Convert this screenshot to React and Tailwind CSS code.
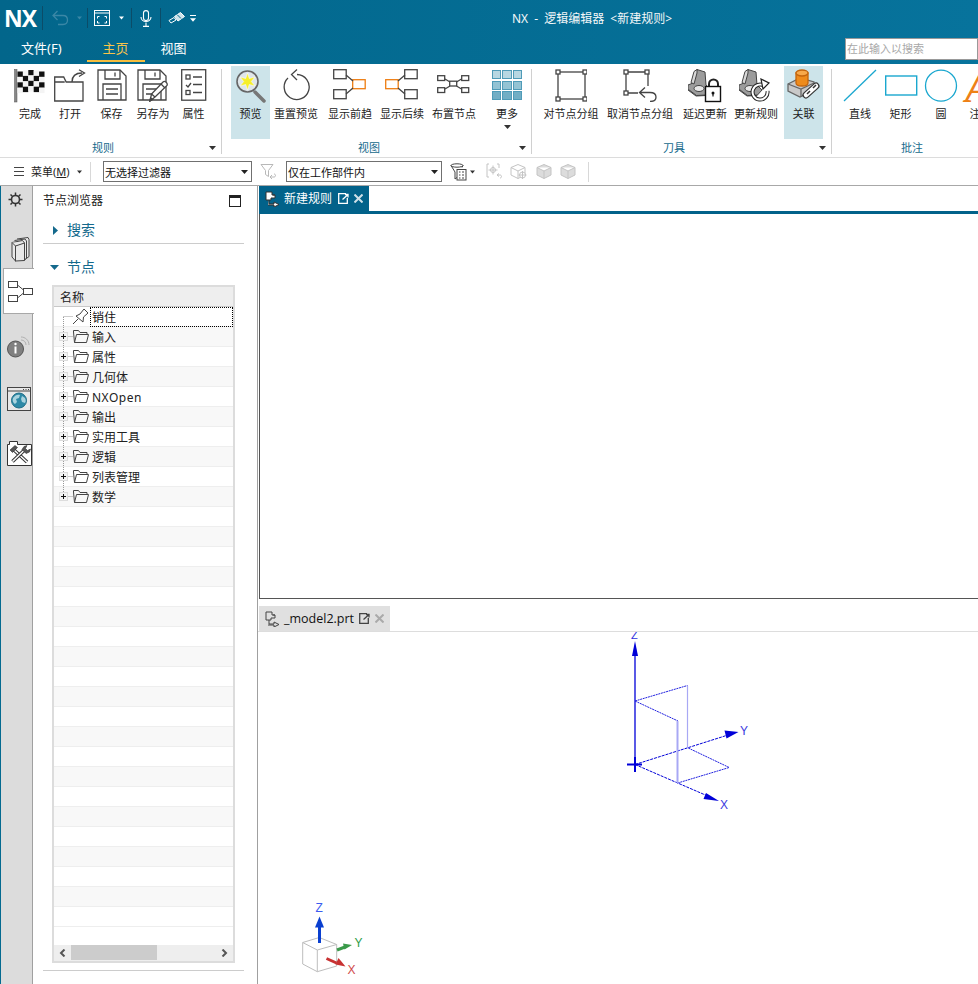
import React from 'react';

const Caret = ({ color = '#333', w = 7 }) => (
  <svg width={w} height="4" viewBox="0 0 7 4" className="shrink-0"><path d="M0 0h7L3.5 4z" fill={color} /></svg>
);

const S = ({ w = 36, h = 36, children }) => (
  <svg width={w} height={h} viewBox={`0 0 ${w} ${h}`} fill="none" stroke="#444" strokeWidth="1.3">{children}</svg>
);

function FlagIcon() {
  const cells = [];
  const off = [1.5, 0.5, 0, 0.5, 1.5];
  for (let c = 0; c < 5; c++) {
    for (let r = 0; r < 4; r++) {
      cells.push(<rect key={c + '-' + r} x={3.5 + c * 5.4} y={1 + off[c] + r * 5.4} width="5.4" height="5.4" fill={(c + r) % 2 === 0 ? '#111' : '#f4f4f4'} stroke="none" />);
    }
  }
  return <S w={32} h={34}><rect x="0.5" y="0.5" width="2.5" height="32.5" fill="#888" stroke="#555" strokeWidth=".5" />{cells}</S>;
}
const OpenIcon = () => (
  <S w={32} h={33}>
    <path d="M.7 32V8h9l2.5 5H29v19zM.7 13h10" />
    <path d="M18 13c0-6 4-9 10-9" /><path d="M25 .8L30.5 4 25 7.5" />
  </S>
);
const Floppy = () => (
  <>
    <path d="M1 1h22l6 6v24H1z" />
    <path d="M8 1v9h15V1M18 3.5v4" />
    <path d="M6 31V15h18v16M9 20h12M9 25h12" />
  </>
);
const SaveIcon = () => <S w={30} h={32}><Floppy /></S>;
const SaveAsIcon = () => (
  <S w={33} h={33}>
    <Floppy />
    <path d="M13 32l1.5-7L26 13c2-1.700 5 1 4 3.500L18 28z" fill="#fff" />
    <path d="M14.500 25l3.500 3M24 15l4 4" />
    <path d="M13 32l.6-3 2 1.500z" fill="#444" />
  </S>
);
const PropsIcon = () => (
  <S w={26} h={32}>
    <rect x=".7" y=".7" width="24" height="30.500" />
    <rect x="5" y="6" width="4" height="4" /><path d="M12 8h9M12 15.500h9M12 23.500h9" />
    <path d="M5 16l2 2 3-4" />
    <rect x="5" y="21.500" width="4" height="4" />
  </S>
);
const PreviewIcon = () => (
  <S w={32} h={34}>
    <path d="M20 23l9 9" stroke="#777" strokeWidth="3.500" strokeLinecap="round" />
    <circle cx="12.500" cy="12.500" r="10.500" fill="#dfe6ea" stroke="#666" strokeWidth="1.600" />
    <path d="M12.500 4l1.800 5.500 5.700-1.500-3.700 4.500 3.700 4.500-5.700-1.500-1.800 5.500-1.800-5.500-5.700 1.500 3.700-4.500-3.700-4.500 5.700 1.500z" fill="#f6ef2a" stroke="#fff" strokeWidth=".5" />
  </S>
);
const ResetIcon = () => (
  <S w={28} h={33}>
    <path d="M15 5.500a12.500 12.500 0 1 1-9 3.500" /><path d="M15 0.500L9.500 5.500l5.500 5.500" />
  </S>
);
const PredIcon = () => (
  <S w={34} h={32}>
    <rect x=".7" y=".7" width="12.500" height="9" /><rect x=".7" y="20.700" width="12.500" height="9" />
    <rect x="19.700" y="10.700" width="12.500" height="9" stroke="#ee7d11" />
    <path d="M13 6l7 6M13 25l7-6" />
  </S>
);
const SuccIcon = () => (
  <S w={34} h={32}>
    <rect x="19.700" y=".7" width="12.500" height="9" /><rect x="19.700" y="20.700" width="12.500" height="9" />
    <rect x=".7" y="10.700" width="12.500" height="9" stroke="#ee7d11" />
    <path d="M20 6l-7 6M20 25l-7-6" />
  </S>
);
const LayoutIcon = () => (
  <S w={34} h={32}>
    <g transform="translate(0 6)">
      <rect x=".7" y=".7" width="7" height="4.800" /><rect x="24.700" y=".7" width="7" height="4.800" />
      <rect x=".7" y="12.700" width="7" height="4.800" /><rect x="24.700" y="12.700" width="7" height="4.800" />
      <rect x="12.700" y="6.200" width="7" height="4.800" />
      <path d="M8 4l5 3M24.500 4l-5 3M8 14l5-3M24.500 14l-5-3" />
    </g>
  </S>
);
const MoreIcon = () => (
  <div className="grid grid-cols-3 gap-[1.5px] w-[31px] mt-[1px]">
    {['#b7d7e2', '#b7d7e2', '#b7d7e2', '#93c3d4', '#93c3d4', '#93c3d4', '#72aec5', '#72aec5', '#72aec5'].map((c, i) => (
      <div key={i} className="h-[9px] border border-[#4f9bb8]" style={{ backgroundColor: c }} />
    ))}
  </div>
);
const Handle = ({ x, y }) => <rect x={x - 2} y={y - 2} width="4" height="4" fill="#fff" />;
const GroupIcon = () => (
  <S w={32} h={33}>
    <rect x="3" y="3" width="27" height="27" /><Handle x={3} y={3} /><Handle x={30} y={3} /><Handle x={3} y={30} /><Handle x={30} y={30} />
  </S>
);
const UngroupIcon = () => (
  <S w={34} h={33}>
    <path d="M3 3h22v14M3 3v21h12" /><Handle x={3} y={3} /><Handle x={24} y={3} /><Handle x={3} y={24} />
    <path d="M22 18.500l-5.500 5 5.500 5M17 23.500h10c4 0 6 2 6 4.500s-2 4.500-6 4.500" />
  </S>
);
const Part = () => (
  <g stroke="#444" strokeWidth="1">
    <path d="M9 .5l8 2.500 1 13 5 5-5 5.500-10 .5-8-6v-5l5-2z" fill="#9c9c9c" />
    <path d="M9 .5l-3 2-3 11 3 1.500 3-11z" fill="#d8d8d8" />
    <ellipse cx="11" cy="19.500" rx="5" ry="3" fill="#e8e8e8" />
    <path d="M.5 20.500l8 6 10-.5" />
  </g>
);
const LockIcon = () => (
  <S w={34} h={34}>
    <Part />
    <path d="M21 18v-3a4.500 4.500 0 0 1 9 0v3" strokeWidth="2" stroke="#222" />
    <rect x="17.500" y="17.500" width="15" height="15" fill="#fff" stroke="#111" strokeWidth="1.400" />
    <circle cx="25" cy="24" r="1.500" fill="#111" stroke="none" /><path d="M25 24v3.500" stroke="#111" strokeWidth="1.200" />
  </S>
);
const RefreshIcon = () => (
  <S w={34} h={34}>
    <Part />
    <path d="M28.500 22a7.500 7.500 0 1 1-3-5" stroke="#222" strokeWidth="4" />
    <path d="M28.500 22a7.500 7.500 0 1 1-3-5" stroke="#fff" strokeWidth="2" />
    <path d="M22 10l8 4-6 6z" fill="#fff" stroke="#222" strokeWidth="1.200" />
  </S>
);
const LinkIcon = () => (
  <S w={34} h={34}>
    <path d="M1 15l12-6 14 4v8L13 28 1 22z" fill="#c9c9c9" stroke="#666" />
    <path d="M1 15l13 5 13-6M14 20v8" stroke="#666" />
    <path d="M9 4v10c0 4 12 4 12 0V4z" fill="#ee8b1c" stroke="#c4650d" />
    <ellipse cx="15" cy="4" rx="6" ry="3" fill="#f7a94b" stroke="#c4650d" />
    <path d="M19 26l10-9" stroke="#333" strokeWidth="7" strokeLinecap="round" />
    <path d="M19 26l10-9" stroke="#fff" strokeWidth="4.500" strokeLinecap="round" />
    <path d="M20 25l3-3M26 19l3-3" stroke="#333" strokeWidth="1.500" />
  </S>
);
const LineIcon = () => <S w={34} h={33}><path d="M1 32L33 1" stroke="#1aa7cf" /></S>;
const RectIcon = () => <S w={34} h={33}><rect x="1.700" y="7" width="31" height="19" stroke="#1aa7cf" strokeWidth="1.400" /></S>;
const CircleIcon = () => <S w={34} h={34}><circle cx="17" cy="16.700" r="15.500" stroke="#1aa7cf" strokeWidth="1.300" /></S>;
const NoteIcon = () => (
  <S w={28} h={36}>
    <text x="4" y="33" fill="#ee8117" stroke="none" fontSize="42" fontWeight="700" fontStyle="italic" fontFamily="'Liberation Serif', serif">A</text>
  </S>
);

function RibbonBtn({ w, ml = 0, active, label, icon, caret }) {
  return (
    <div className={`h-[73px] flex flex-col items-center shrink-0 ${active ? 'bg-[#cde4ea]' : ''}`} style={{ width: w, marginLeft: ml }}>
      <div className="h-[36px] mt-[3px] flex items-start justify-center">{icon}</div>
      <div className="text-[11px] leading-[18px] text-[#222] whitespace-nowrap">{label}</div>
      {caret && <div className="mt-[2px]"><Caret /></div>}
    </div>
  );
}

function Group({ width, pl, label, caret = true, last, children }) {
  return (
    <div className="relative flex flex-col shrink-0" style={{ width }}>
      <div className="flex h-[73px]" style={{ paddingLeft: pl }}>{children}</div>
      <div className="flex items-center h-[16px] mt-[1px]">
        <div className="flex-1 text-center text-[11px] leading-[16px] text-[#14698c]">{label}</div>
        <div className="w-[16px] pr-[4px] flex justify-center">{caret && <Caret />}</div>
      </div>
      {!last && <div className="absolute right-0 top-[3px] bottom-[3px] w-[1px] bg-[#d0d0d0]" />}
    </div>
  );
}

const VSep = ({ ml, h = 22, c = 'bg-[#0b4c68]' }) => <div className={`w-[1px] shrink-0 ${c}`} style={{ marginLeft: ml, height: h }} />;

function TitleBar() {
  return (
    <div className="h-[64px] shrink-0 bg-linear-to-r from-[#02668b] to-[#07739c] text-white">
      <div className="flex items-center h-[36px]">
        <div className="w-[206px] flex items-center shrink-0">
          <span className="ml-[4px] w-[34px] text-[23px] leading-[36px] font-bold [font-family:'Open_Sans',sans-serif] tracking-[-1px]">NX</span>
          <VSep ml={4} h={24} />
          <svg className="ml-[9px]" width="17" height="16" viewBox="0 0 17 16" fill="none" stroke="#3a87a6" strokeWidth="1.300"><path d="M1 5.500h10c6 0 6 9 0 9H6M5.500 1L1 5.500 5.500 10" /></svg>
          <div className="ml-[8px]"><Caret color="#3a87a6" w={5} /></div>
          <VSep ml={5} h={20} />
          <svg className="ml-[6px]" width="16" height="16" viewBox="0 0 16 16" fill="none" stroke="#fff" strokeWidth="1"><rect x=".5" y=".5" width="15" height="15" /><path d="M.5 3h15" /><path d="M3.500 6.500h2M3.500 6.500v2M12.500 6.500h-2M12.500 6.500v2M3.500 13h2M3.500 13v-2M12.500 13h-2M12.500 13v-2" /></svg>
          <div className="ml-[9px]"><Caret color="#fff" w={5} /></div>
          <VSep ml={7} h={20} />
          <svg className="ml-[8px]" width="12" height="17" viewBox="0 0 12 17" fill="none" stroke="#fff" strokeWidth="1.100"><rect x="3.500" y=".6" width="5" height="10" rx="2.500" /><path d="M1 7c0 6 10 6 10 0M6 12.500v3.500M3 16.400h6" /></svg>
          <VSep ml={8} h={20} />
          <svg className="ml-[7px]" width="17" height="12" viewBox="0 0 17 12" fill="none" stroke="#fff" strokeWidth="1"><path d="M1 8.500l5-3 2 2.500-5 3z" /><path d="M6.500 4.500l6-4 4 4-6.500 4.500z" fill="#cfe3ea" /><path d="M9 2.500l4 4" stroke="#02668b" /></svg>
          <div className="ml-[5px] flex flex-col gap-[2px]"><div className="h-[1px] w-[6px] bg-white" /><Caret color="#fff" w={6} /></div>
        </div>
        <div className="flex-1 text-center text-[12px] leading-[37px] pt-[1px] text-[#f3f7f9] whitespace-nowrap [word-spacing:3px]">NX - 逻辑编辑器 &lt;新建规则&gt;</div>
      </div>
      <div className="flex h-[28px] items-start text-[13px]">
        <span className="ml-[21px] mt-[2px] leading-[20px]">文件(F)</span>
        <span className="ml-[25px] w-[58px] h-[26px] pt-[2px] leading-[20px] text-center text-[#f6c44b] border-b-2 border-[#f5bd3e]">主页</span>
        <span className="ml-[16px] mt-[2px] leading-[20px]">视图</span>
        <div className="ml-auto w-[133px] h-[22px] mt-[2px] bg-white border border-[#999] text-[11px] leading-[20px] text-[#a8a8a8] pl-[1px]">在此输入以搜索</div>
      </div>
    </div>
  );
}

function Ribbon() {
  return (
    <div className="h-[94px] shrink-0 flex pt-[2px] overflow-hidden bg-white border-b border-[#dcdcdc]">
      <Group width={222} pl={10} label="规则">
        <RibbonBtn w={40} label="完成" icon={<FlagIcon />} />
        <RibbonBtn w={40} label="打开" icon={<OpenIcon />} />
        <RibbonBtn w={43} label="保存" icon={<SaveIcon />} />
        <RibbonBtn w={40} label="另存为" icon={<SaveAsIcon />} />
        <RibbonBtn w={41} label="属性" icon={<PropsIcon />} />
      </Group>
      <Group width={310} pl={9} label="视图">
        <RibbonBtn w={39} active label="预览" icon={<PreviewIcon />} />
        <RibbonBtn w={52} label="重置预览" icon={<ResetIcon />} />
        <RibbonBtn w={52} ml={2} label="显示前趋" icon={<PredIcon />} />
        <RibbonBtn w={52} label="显示后续" icon={<SuccIcon />} />
        <RibbonBtn w={52} label="布置节点" icon={<LayoutIcon />} />
        <RibbonBtn w={40} ml={7} label="更多" icon={<MoreIcon />} caret />
      </Group>
      <Group width={300} pl={4} label="刀具">
        <RibbonBtn w={70} label="对节点分组" icon={<GroupIcon />} />
        <RibbonBtn w={68} label="取消节点分组" icon={<UngroupIcon />} />
        <RibbonBtn w={52} ml={5} label="延迟更新" icon={<LockIcon />} />
        <RibbonBtn w={50} label="更新规则" icon={<RefreshIcon />} />
        <RibbonBtn w={39} ml={3} active label="关联" icon={<LinkIcon />} />
      </Group>
      <Group width={176} pl={8} label="批注" caret={false} last>
        <RibbonBtn w={40} label="直线" icon={<LineIcon />} />
        <RibbonBtn w={41} label="矩形" icon={<RectIcon />} />
        <RibbonBtn w={40} label="圆" icon={<CircleIcon />} />
        <RibbonBtn w={28} label="注" icon={<NoteIcon />} />
      </Group>
    </div>
  );
}

const Select = ({ w, ml, text }) => (
  <div className="h-[21px] flex items-center border border-[#707070] bg-white shrink-0 pl-[1px] pr-[3px]" style={{ width: w, marginLeft: ml }}>
    <span className="flex-1 text-[11px] leading-[21px] pt-[1px] text-[#111]">{text}</span>
    <Caret color="#222" w={7} />
  </div>
);

const GhostCube = ({ ml, plus }) => (
  <svg width="17" height="17" viewBox="0 0 17 17" fill={plus ? 'none' : '#dcdcdc'} stroke="#c4c4c4" strokeWidth="1" style={{ marginLeft: ml }} className="shrink-0">
    <path d="M8 1.500L15 4.500V12L8 15.500 1 12V4.500zM1 4.500L8 8l7-3.500M8 8v7.500" />
    {plus && <g><circle cx="12.500" cy="12" r="3" fill="#fff" /><path d="M12.500 8v8M8.500 12h8" /></g>}
  </svg>
);

function Toolbar() {
  return (
    <div className="h-[28px] shrink-0 flex items-center bg-white border-b border-[#a8a8a8]">
      <div className="ml-[14px] w-[10px] flex flex-col gap-[3px]">
        <div className="h-[1px] bg-[#444]" /><div className="h-[1px] bg-[#444]" /><div className="h-[1px] bg-[#444]" />
      </div>
      <span className="ml-[7px] w-[41px] text-[11px] leading-[22px] pt-[1px] text-[#222] whitespace-nowrap">菜单(<span className="underline">M</span>)</span>
      <div className="ml-[5px]"><Caret w={5} /></div>
      <div className="ml-[8px] w-[1px] h-[20px] bg-[#d8d8d8]" />
      <Select w={149} ml={12} text="无选择过滤器" />
      <svg className="ml-[8px] shrink-0" width="17" height="17" viewBox="0 0 17 17" fill="none" stroke="#b8b8b8" strokeWidth="1"><path d="M1 1.500h12L8.500 7.500v6L5.500 11.500v-4zM10 14l2-2m-2 2l2 2m-2-2h4c2 0 2-3 0-3" /></svg>
      <Select w={156} ml={9} text="仅在工作部件内" />
      <svg className="ml-[8px] shrink-0" width="17" height="18" viewBox="0 0 17 18" fill="none" stroke="#444" strokeWidth="1"><ellipse cx="7" cy="2.500" rx="6" ry="1.700" /><path d="M1 2.500l4 6.500v7l2-1.500M13 2.500l-1 2" /><rect x="7" y="6.500" width="9" height="10.500" fill="#fff" /><path d="M9 9h1.500M12 9h2M9 12h1.500M12 12h2M9 15h1.500M12 15h2" /></svg>
      <div className="ml-[3px]"><Caret w={5} /></div>
      <svg className="ml-[11px] shrink-0" width="17" height="17" viewBox="0 0 17 17" fill="none" stroke="#c4c4c4" strokeWidth="1"><path d="M3 1H1v13h2M11 1h2v4" /><circle cx="7" cy="7" r="2.500" /><path d="M7 2.500v9M2.500 7h9M11 12l2-1.500M11 12l2 1.500M11 12h3c2 0 2 3 0 3" /></svg>
      <GhostCube ml={7} plus />
      <GhostCube ml={9} />
      <GhostCube ml={7} />
      <div className="ml-[11px] w-[1px] h-[20px] bg-[#d8d8d8]" />
    </div>
  );
}

const GearIcon = () => (
  <svg width="15" height="15" viewBox="0 0 15 15" fill="none" stroke="#333">
    <circle cx="7.500" cy="7.500" r="4" strokeWidth="1.600" />
    <path d="M7.500 .5v2.500M7.500 12v2.500M.5 7.500H3M12 7.500h2.500M2.500 2.500l1.800 1.800M10.700 10.700l1.800 1.800M12.500 2.500l-1.800 1.800M4.300 10.700l-1.800 1.800" strokeWidth="1.500" />
  </svg>
);
const BooksIcon = () => (
  <svg width="19" height="25" viewBox="0 0 19 25" fill="#e8e8e8" stroke="#444" strokeWidth="1">
    <path d="M6 2l11-1.500 1 2v17l-4 3" />
    <path d="M3.500 3.500L14 2l1.500 2v17l-3 3" />
    <path d="M1 5.500l10.500-2 2 2.500v17.500l-9 0.500-3.500-4z" />
    <path d="M1 5.500l3.500 3.500 9-3M4.500 9v15.500" />
  </svg>
);
const NodeNavIcon = () => (
  <svg width="25" height="21" viewBox="0 0 25 21" fill="none" stroke="#444" strokeWidth="1">
    <rect x=".5" y=".5" width="9" height="6" /><rect x=".5" y="14.500" width="9" height="6" /><rect x="15.500" y="7.500" width="9" height="6" />
    <path d="M9.500 4l6 5M9.500 17l6-5" />
  </svg>
);
const InfoIcon = () => (
  <svg width="24" height="24" viewBox="0 0 24 24" fill="none">
    <path d="M14 2c4 0 8 3 8 8M14 5c3 0 5 2 5 5" stroke="#b0b0b0" />
    <circle cx="8.500" cy="14" r="8" fill="#808080" stroke="#555" />
    <path d="M8.500 11.500v7" stroke="#fff" strokeWidth="2" /><circle cx="8.500" cy="9" r="1.200" fill="#fff" />
  </svg>
);
const WebIcon = () => (
  <svg width="24" height="24" viewBox="0 0 24 24" fill="none" stroke="#444">
    <rect x=".5" y=".5" width="23" height="23" fill="#e8e8e8" />
    <path d="M.5 4h23" /><path d="M16 2.500h1M18.500 2.500h1M21 2.500h1" />
    <circle cx="12" cy="13.500" r="7.500" fill="#2d89a6" stroke="#1f6d86" />
    <path d="M6 11c2-3 5-4 7-3l-1 3-3 1 1 3-2 2c-2-1-3-4-2-6zM15 9l3 2c1 2 1 4 0 5l-3-1-1-3z" fill="#a9d3de" stroke="none" />
  </svg>
);
const ToolsIcon = () => (
  <svg width="25" height="25" viewBox="0 0 25 25" fill="#fff" stroke="#333">
    <path d="M.5 24.500V3.500h2V.5h8v3h14v21z" />
    <path d="M6.500 8.500L20 21" strokeWidth="3.500" stroke="#333" />
    <path d="M6.500 8.500L20 21" strokeWidth="1.500" stroke="#fff" />
    <path d="M18 8.500L5.500 20.500" strokeWidth="3.500" stroke="#333" />
    <path d="M18 8.500L5.500 20.500" strokeWidth="1.500" stroke="#fff" />
    <path d="M3 9l5-4.500 2.500 2-5 5zM17 5.500l3-1-1.500 3 2 2 3-1.500-1 3-3.500 1.500-4-4z" fill="#555" stroke="#333" strokeWidth=".6" />
  </svg>
);

function StripItem({ h, pl, pt = 0, active, children }) {
  return (
    <div className={`flex items-center shrink-0 ${active ? 'ml-[2px] mr-[-2px] z-10 bg-white border-y border-l border-[#a8a8a8]' : ''}`} style={{ height: h, paddingLeft: pl, paddingTop: pt }}>
      {children}
    </div>
  );
}

function LeftStrip() {
  return (
    <div className="w-[33px] shrink-0 flex flex-col bg-[#dcdcdc] border-l border-[#046a90] border-r border-r-[#a0a0a0]">
      <StripItem h={26} pl={7}><GearIcon /></StripItem>
      <StripItem h={56} pl={10} pt={18}><BooksIcon /></StripItem>
      <StripItem h={46} pl={4} active><NodeNavIcon /></StripItem>
      <StripItem h={66} pl={6}><InfoIcon /></StripItem>
      <StripItem h={38} pl={6}><WebIcon /></StripItem>
      <StripItem h={70} pl={6}><ToolsIcon /></StripItem>
    </div>
  );
}

const TREE = ['输入', '属性', '几何体', 'NXOpen', '输出', '实用工具', '逻辑', '列表管理', '数学'];

const FolderIcon = () => (
  <svg width="16" height="13" viewBox="0 0 16 13" fill="none" stroke="#444" strokeWidth="1" className="shrink-0">
    <path d="M1.500 12.500L.5 2V.5h5l1.500 2h7v2M1.500 12.500h12l2-8h-12z" />
  </svg>
);
const PinIcon = () => (
  <svg width="17" height="17" viewBox="0 0 17 17" fill="#fff" stroke="#444" strokeWidth="1" className="shrink-0">
    <path d="M1 16l5-5M4 8l7 6 .5-5L16 5l-4-4-4 5z" />
  </svg>
);

function TreePrefix({ first, last, plus = true }) {
  return (
    <svg width="19" height="20" viewBox="0 0 19 20" className="shrink-0" fill="none">
      <path d={first ? 'M9.500 10v10' : last ? 'M9.500 0v6' : 'M9.500 0v20'} stroke="#999" strokeDasharray="1 1" />
      <path d="M9.500 9.500H19" stroke="#999" strokeDasharray="1 1" />
      {plus && (
        <g>
          <rect x="5.500" y="5.500" width="8" height="8" fill="#f4f4f4" stroke="#ddd" />
          <path d="M7 9.500h5M9.500 7v5" stroke="#111" />
        </g>
      )}
    </svg>
  );
}

function NodeTable() {
  const blanks = Array.from({ length: 21 });
  return (
    <div className="mt-[7px] ml-[9px] w-[183px] h-[678px] border-2 border-[#dcdcdc] flex flex-col bg-white shrink-0">
      <div className="h-[20px] shrink-0 bg-[#eeeeee] border-b border-[#c8c8c8] pl-[6px] pt-[1px] text-[12px] leading-[19px] text-[#222]">名称</div>
      <div className="flex-1 overflow-hidden">
        <div className="h-[20px] flex items-center bg-white border-b border-[#eee]">
          <TreePrefix first plus={false} />
          <div className="-ml-[1px]"><PinIcon /></div>
          <div className="ml-[1px] flex-1 h-[20px] border border-dotted border-black text-[12px] leading-[19px] pl-[1px] text-[#111]">销住</div>
        </div>
        {TREE.map((t, i) => (
          <div key={t} className={`h-[20px] flex items-center border-b border-[#eee] ${i % 2 === 0 ? 'bg-[#f8f8f8]' : 'bg-white'}`}>
            <TreePrefix last={i === TREE.length - 1} />
            <FolderIcon />
            <span className={`ml-[3px] pt-[1px] text-[12px] leading-[19px] text-[#222] ${t === 'NXOpen' ? 'tracking-[0.5px]' : ''}`}>{t}</span>
          </div>
        ))}
        {blanks.map((_, i) => (
          <div key={i} className={`h-[20px] border-b border-[#eee] ${i % 2 === 1 ? 'bg-[#f8f8f8]' : 'bg-white'}`} />
        ))}
      </div>
      <div className="h-[16px] shrink-0 bg-[#eeeeee] flex items-start">
        <svg className="ml-[5px] mt-[4px]" width="7" height="8" viewBox="0 0 7 8" fill="none" stroke="#555" strokeWidth="2"><path d="M5.500 .5L2 4l3.500 3.500" /></svg>
        <div className="ml-[5px] w-[86px] h-[15px] bg-[#cccccc]" />
        <svg className="ml-auto mr-[5px] mt-[4px]" width="7" height="8" viewBox="0 0 7 8" fill="none" stroke="#555" strokeWidth="2"><path d="M1.500 .5L5 4 1.500 7.500" /></svg>
      </div>
    </div>
  );
}

function NodeBrowser() {
  return (
    <div className="w-[225px] shrink-0 bg-white border-r border-[#a0a0a0] flex flex-col pl-[10px] overflow-hidden">
      <div className="flex items-center h-[28px] mt-[1px]">
        <span className="text-[12px] text-[#222]">节点浏览器</span>
        <div className="ml-[126px] w-[12px] h-[12px] border border-[#222] border-t-[3px]" />
      </div>
      <div className="w-[201px] h-[27px] flex items-center border-b border-[#cccccc] mt-[2px]">
        <svg className="ml-[10px]" width="5" height="9" viewBox="0 0 5 9"><path d="M0 0l5 4.500L0 9z" fill="#14698c" /></svg>
        <span className="ml-[9px] text-[14px] leading-[20px] text-[#14698c]">搜索</span>
      </div>
      <div className="h-[22px] flex items-center mt-[12px]">
        <svg className="ml-[7px]" width="9" height="5" viewBox="0 0 9 5"><path d="M0 0h9L4.500 5z" fill="#14698c" /></svg>
        <span className="ml-[8px] text-[14px] leading-[20px] text-[#14698c]">节点</span>
      </div>
      <NodeTable />
      <div className="w-[201px] mt-[7px] h-[1px] bg-[#cccccc]" />
    </div>
  );
}

const PopOut = ({ c }) => (
  <svg width="11" height="11" viewBox="0 0 11 11" fill="none" stroke={c} strokeWidth="1.300" className="shrink-0">
    <path d="M8 .7H.7v9.600h8.600V5" /><path d="M4.500 6.500L9.500 2M7 1.500l3 0 0 3" />
  </svg>
);
const CloseX = ({ c }) => (
  <svg width="9" height="9" viewBox="0 0 9 9" fill="none" stroke={c} strokeWidth="2" className="shrink-0"><path d="M.5 .5l8 8M8.500 .5l-8 8" /></svg>
);
const DocIcon = ({ dark }) => (
  <svg width="15" height="16" viewBox="0 0 15 16" className="shrink-0" fill={dark ? '#fff' : 'none'} stroke={dark ? '#333' : '#444'} strokeWidth="1">
    <path d="M1 1h6v3h3v3H6v2H1z" /><path d="M4 9v4h5v-2l5 2.500-5 2.500v-2H3" />
    <path d="M8 4h2" />
  </svg>
);

function Axes() {
  const blue = '#0000d8';
  const pale = '#a8a8f4';
  return (
    <svg className="absolute inset-0" width="720" height="352" viewBox="258 632 720 352" fill="none">
      <path d="M635 764V650" stroke={blue} strokeWidth="1.300" />
      <path d="M635 641l-3 15h6z" fill={blue} />
      <text x="631" y="638.500" fontSize="11" fill="#3030e0" fontFamily="'Liberation Sans', sans-serif">Z</text>
      <path d="M627 764.500h15M635 757v15" stroke={blue} strokeWidth="2" />
      <path d="M635 764.500L728 735M635 764.500L710 797" stroke={blue} strokeDasharray="3 1" />
      <path d="M738.500 732l-14-1.500 2 8z" fill={blue} />
      <path d="M719 801l-13-8-2.500 6z" fill={blue} />
      <text x="740" y="735" fontSize="12" fill="#3b3be0" fontFamily="'Liberation Sans', sans-serif">Y</text>
      <text x="720" y="809" fontSize="12" fill="#3b3be0" fontFamily="'Liberation Sans', sans-serif">X</text>
      <path d="M635 701l52.500-15.500M635 701l43 20M677.700 783l51.500-15.500-42-20" stroke="#2222e0" strokeWidth="1" strokeDasharray="2 .7" />
      <path d="M687.500 686v62" stroke={pale} strokeWidth="1.200" />
      <path d="M677.500 721v62" stroke={pale} strokeWidth="2" />
      <path d="M302.700 942.500l16.600-5 17.400 7-19.400 5.500zM302.700 942.500V964l14.600 7.700 19.400-5.700V944.500M317.300 950v21.700" stroke="#bdbdbd" strokeWidth="1" fill="#fff" />
      <path d="M319.500 943v-17" stroke="#0a3fd0" strokeWidth="3" />
      <path d="M319.500 916.500l-4.500 11h9z" fill="#0a3fd0" />
      <path d="M337 950l8-3" stroke="#3a9a4a" strokeWidth="3" />
      <path d="M352 945l-9-1.500 1.500 6z" fill="#3a9a4a" />
      <path d="M326.500 958.500l10 4.500" stroke="#c83232" strokeWidth="3" />
      <path d="M345.500 966.500l-7-8.500-3 6.500z" fill="#c83232" />
      <text x="315.500" y="912" fontSize="12" fill="#3b5cf0" fontFamily="'Liberation Sans', sans-serif">Z</text>
      <text x="354.500" y="947" fontSize="12" fill="#2e9c46" fontFamily="'Liberation Sans', sans-serif">Y</text>
      <text x="347.500" y="974" fontSize="12" fill="#d04a4a" fontFamily="'Liberation Sans', sans-serif">X</text>
    </svg>
  );
}

function Workspace() {
  return (
    <div className="flex-1 min-w-0 flex flex-col bg-white overflow-hidden">
      <div className="h-[25px] shrink-0 flex pl-[1px]">
        <div className="w-[110px] bg-[#02628a] flex items-center pl-[6px] text-white">
          <DocIcon dark />
          <span className="ml-[4px] w-[54px] text-[12px] leading-[25px]">新建规则</span>
          <PopOut c="#fff" />
          <div className="ml-[5px]"><CloseX c="#cfe0e8" /></div>
        </div>
      </div>
      <div className="h-[3px] shrink-0 bg-[#02628a] ml-[1px]" />
      <div className="h-[385px] shrink-0 ml-[1px] border-l border-b border-[#555] bg-white" />
      <div className="h-[7px] shrink-0" />
      <div className="h-[25px] shrink-0 flex pl-[1px]">
        <div className="w-[131px] bg-[#e0e0e0] flex items-center pl-[6px]">
          <DocIcon />
          <span className="ml-[4px] w-[75px] text-[12.5px] leading-[25px] text-[#111] [font-family:'Open_Sans',sans-serif]">_model2.prt</span>
          <PopOut c="#444" />
          <div className="ml-[5px]"><CloseX c="#aaa" /></div>
        </div>
      </div>
      <div className="h-[1px] shrink-0 bg-[#dddddd]" />
      <div className="relative flex-1"><Axes /></div>
    </div>
  );
}

export default function App() {
  return (
    <div className="w-[978px] h-[984px] overflow-hidden flex flex-col bg-white [font-family:'Noto_Sans','Noto_Sans_CJK_SC',sans-serif]">
      <TitleBar />
      <Ribbon />
      <Toolbar />
      <div className="flex-1 flex min-h-0">
        <LeftStrip />
        <NodeBrowser />
        <Workspace />
      </div>
    </div>
  );
}
